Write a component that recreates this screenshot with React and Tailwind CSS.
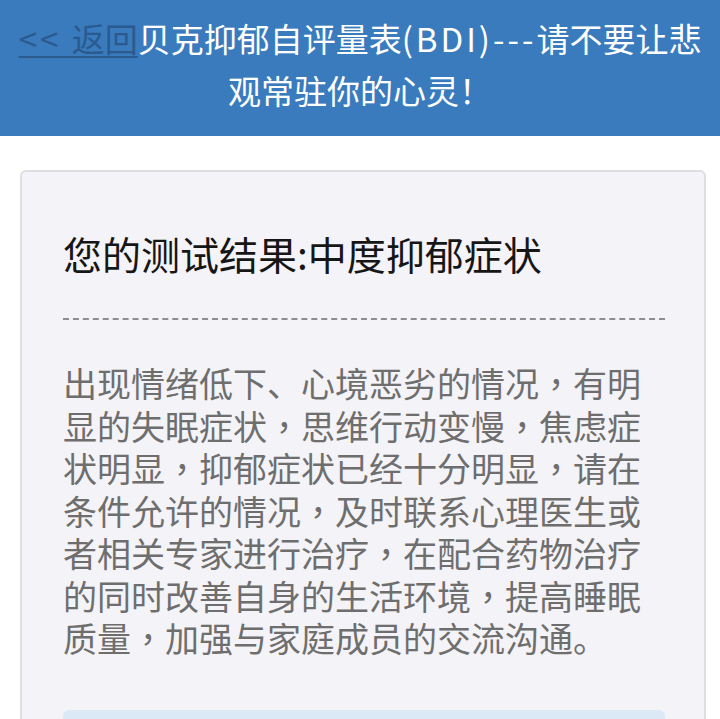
export default function App() {
  const cjk = { fontFamily: '"Noto Sans CJK SC", "Noto Sans", sans-serif' };
  const comma = (
    <span style={{ fontFamily: '"Noto Sans CJK TC", sans-serif' }}>，</span>
  );

  return (
    <div className="min-h-[719px] bg-white" style={cjk}>
      {/* header */}
      <div className="bg-[#3a7bbd] px-[14px] pt-[12px] pb-[20px] text-center text-[33px] leading-[52px] text-white">
        <a href="#" className="text-[#2a5a8e] underline decoration-2 underline-offset-4">
          <span className="tracking-[3px]">&lt;&lt; </span>返回
        </a>
        贝克抑郁自评量表<span className="tracking-[3px]">(BDI)---</span>请不要让悲观常驻你的心灵！
      </div>

      <div className="pt-[34px] pl-5 pr-[14px]">
        <div className="rounded-md border-2 border-[#dedde2] bg-[#f4f3f7] pl-[41px] pr-[39px] pt-[54px]">
          <h1 className="text-[39px] leading-[54px] font-normal text-[#161616]">
            您的测试结果:中度抑郁症状
          </h1>

          <div className="mt-[38px] border-t-2 border-dashed border-[#8e8e8e]" />

          <p className="mt-[42px] text-[34px] leading-[42.5px] text-[#6e6e6e]">
            出现情绪低下、心境恶劣的情况{comma}有明显的失眠症状{comma}思维行动变慢{comma}焦虑症状明显{comma}抑郁症状已经十分明显{comma}请在条件允许的情况{comma}及时联系心理医生或者相关专家进行治疗{comma}在配合药物治疗的同时改善自身的生活环境{comma}提高睡眠质量{comma}加强与家庭成员的交流沟通。
          </p>

          <div className="mt-[50px] h-[60px] rounded-t-md bg-[#dbe8f5]" />
        </div>
      </div>
    </div>
  );
}
